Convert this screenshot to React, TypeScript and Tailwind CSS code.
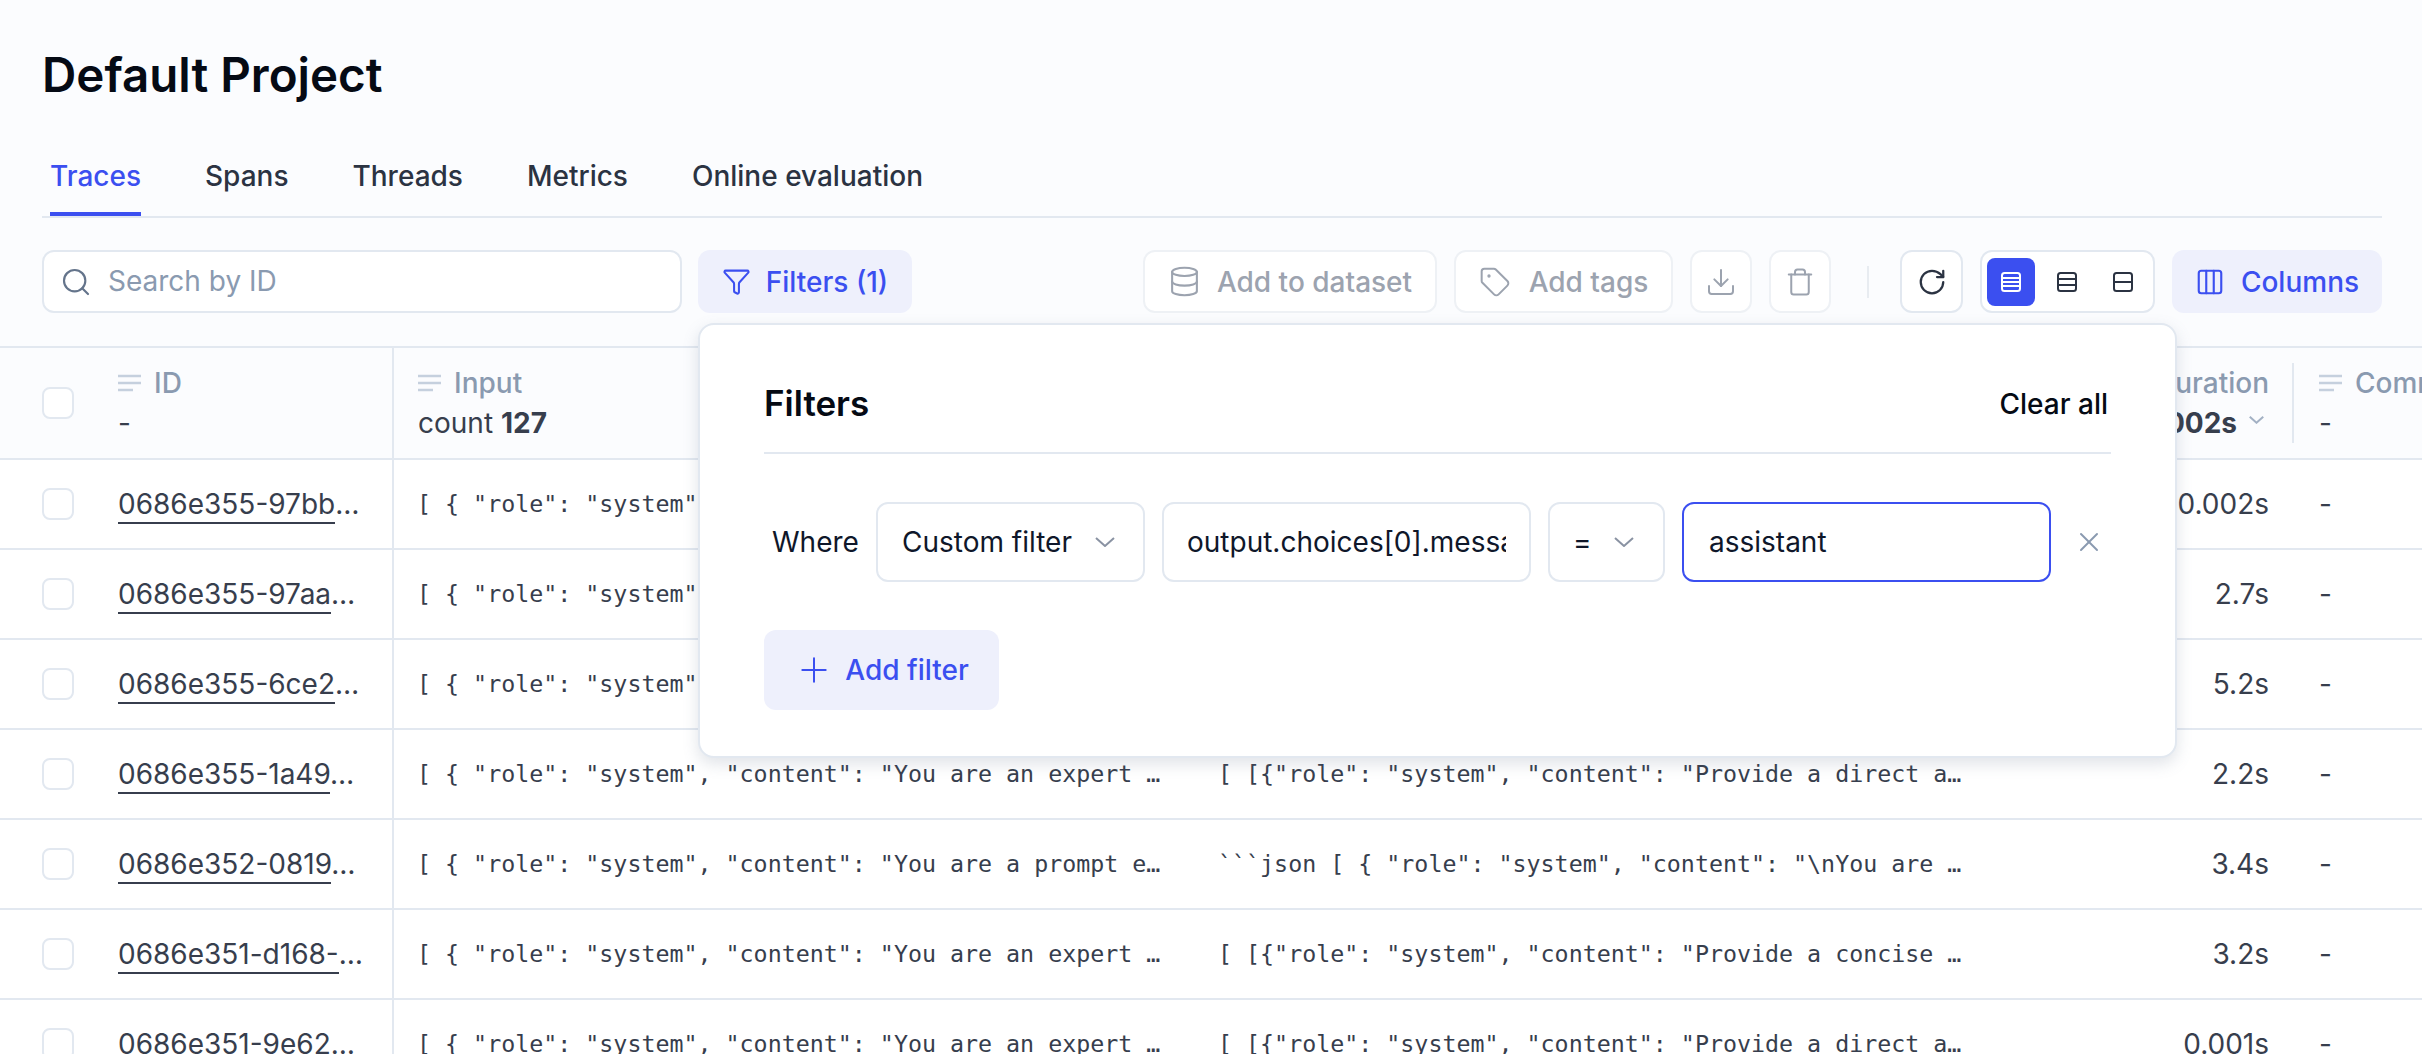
import { Columns3, Database, Download, Funnel, Plus, RotateCw, Search, Tag, Trash, X } from 'lucide-react';

const rows = [
  { id: '0686e355-97bb', input: '[ { "role": "system", "content": "You are an expert …', output: '[ [{"role": "system", "content": "Provide a direct a…', duration: '0.002s' },
  { id: '0686e355-97aa', input: '[ { "role": "system", "content": "You are an expert …', output: '[ [{"role": "system", "content": "Provide a direct a…', duration: '2.7s' },
  { id: '0686e355-6ce2', input: '[ { "role": "system", "content": "You are an expert …', output: '[ [{"role": "system", "content": "Provide a direct a…', duration: '5.2s' },
  { id: '0686e355-1a49', input: '[ { "role": "system", "content": "You are an expert …', output: '[ [{"role": "system", "content": "Provide a direct a…', duration: '2.2s' },
  { id: '0686e352-0819', input: '[ { "role": "system", "content": "You are a prompt e…', output: '```json [ { "role": "system", "content": "\\nYou are …', duration: '3.4s' },
  { id: '0686e351-d168-', input: '[ { "role": "system", "content": "You are an expert …', output: '[ [{"role": "system", "content": "Provide a concise …', duration: '3.2s' },
  { id: '0686e351-9e62', input: '[ { "role": "system", "content": "You are an expert …', output: '[ [{"role": "system", "content": "Provide a direct a…', duration: '0.001s' },
];

const tabs = ['Traces', 'Spans', 'Threads', 'Metrics', 'Online evaluation'];

function LinesIcon() {
  return (
    <svg width="24" height="18" viewBox="0 0 24 18" fill="none" stroke="#c5d0de" strokeWidth="2.4" className="shrink-0">
      <path d="M0 2h23M0 9h23M0 16h15" />
    </svg>
  );
}

function RowsIcon({ lines, color }: { lines: number[]; color: string }) {
  return (
    <svg width="22" height="22" viewBox="0 0 22 22" fill="none" stroke={color} strokeWidth="2">
      <rect x="2" y="2" width="18" height="18" rx="2.5" />
      {lines.map((y) => (
        <path key={y} d={`M2 ${y}h18`} />
      ))}
    </svg>
  );
}

function Chevron({ w, color, className }: { w: number; color: string; className?: string }) {
  return (
    <svg width={w} height={w / 2} viewBox="0 0 20 10" fill="none" stroke={color} strokeWidth={(2 * 20) / w} className={className}>
      <path d="M1 1l9 8 9-8" />
    </svg>
  );
}

function Checkbox() {
  return <div className="w-8 h-8 rounded-lg border-2 border-[#e2e8f0] bg-white shrink-0" />;
}

function ToolButton({ className, children }: { className: string; children: React.ReactNode }) {
  return (
    <button className={`h-[63px] rounded-xl border-2 border-[#eef1f5] bg-white flex items-center justify-center text-[#9ca3af] text-[28px] font-medium ${className}`}>
      {children}
    </button>
  );
}

function HeaderCell({ label, children }: { label: string; children: React.ReactNode }) {
  return (
    <div className="flex flex-col gap-1 text-[28px] leading-[36px] text-[#373e4d]">
      <div className="flex items-center gap-3 text-[#8a9ab0] font-medium">
        <LinesIcon />
        <span className="whitespace-nowrap">{label}</span>
      </div>
      {children}
    </div>
  );
}

function FilterBox({ className, children }: { className: string; children: React.ReactNode }) {
  return (
    <div className={`h-20 rounded-xl border-2 flex items-center text-[28px] text-[#0f172a] bg-white overflow-hidden whitespace-nowrap ${className}`}>
      {children}
    </div>
  );
}

export default function App() {
  return (
    <div className="relative w-[2422px] h-[1054px] overflow-hidden bg-[#fbfcfe] font-['Inter',sans-serif]">
      <div className="pl-[42px] pr-[40px]">
        <h1 className="pt-[47px] text-[47.5px] leading-[56px] font-semibold text-[#050a14]">Default Project</h1>
        <div className="mt-[55px] h-[60px] flex gap-[64px] pl-2 border-b-2 border-[#e2e8f0]">
          {tabs.map((t, i) => (
            <div
              key={t}
              className={`h-[58px] text-[28px] leading-[36px] font-medium whitespace-nowrap ${
                i === 0 ? 'text-[#3b4ff0] border-b-4 border-[#3b4ff0]' : 'text-[#2b3342]'
              }`}
            >
              {t}
            </div>
          ))}
        </div>

        <div className="mt-[32px] flex items-center">
          <div className="w-[640px] h-[63px] rounded-xl border-2 border-[#e2e8f0] bg-white flex items-center gap-4 px-4 text-[28px] text-[#8a9ab0]">
            <Search size={32} color="#64748b" strokeWidth={1.6} />
            <span className="pb-[2px]">Search by ID</span>
          </div>
          <button className="ml-[16px] w-[214px] h-[63px] rounded-xl bg-[#eef0fc] flex items-center justify-center gap-[15px] text-[28px] font-medium text-[#3b4ff0]">
            <Funnel size={29} strokeWidth={1.7} />
            Filters (1)
          </button>
          <div className="ml-auto flex items-center gap-[17px]">
            <ToolButton className="w-[294px] gap-4">
              <Database size={33} strokeWidth={1.5} />
              Add to dataset
            </ToolButton>
            <ToolButton className="w-[219px] gap-[18px]">
              <Tag size={32} strokeWidth={1.5} />
              Add tags
            </ToolButton>
            <ToolButton className="w-[62px]">
              <Download size={32} strokeWidth={1.5} />
            </ToolButton>
            <ToolButton className="w-[62px]">
              <Trash size={30} strokeWidth={1.6} />
            </ToolButton>
            <div className="w-0.5 h-8 bg-[#e8ecf1] ml-[19px] mr-[14px]" />
            <button className="w-[63px] h-[63px] rounded-xl border-2 border-[#e2e8f0] bg-white flex items-center justify-center text-[#2b3342]">
              <RotateCw size={30} strokeWidth={1.8} />
            </button>
            <div className="w-[175px] h-[63px] rounded-xl border-2 border-[#e2e8f0] bg-white flex items-center pl-[5px]">
              <span className="w-12 h-12 rounded-lg bg-[#3b4ff0] flex items-center justify-center">
                <RowsIcon lines={[7, 11, 15]} color="#ffffff" />
              </span>
              <span className="w-[56px] flex justify-center ml-[4px]"><RowsIcon lines={[8, 14]} color="#2b3342" /></span>
              <span className="w-[56px] flex justify-center"><RowsIcon lines={[11]} color="#2b3342" /></span>
            </div>
            <button className="w-[210px] h-[63px] rounded-xl bg-[#eef0fc] flex items-center justify-center gap-4 text-[28px] font-medium text-[#3b4ff0]">
              <Columns3 size={30} strokeWidth={1.7} />
              Columns
            </button>
          </div>
        </div>
      </div>

      <div className="mt-[33px] border-t-2 border-[#e2e8f0]">
        <div className="h-[112px] flex border-b-2 border-[#e2e8f0]">
          <div className="w-[394px] shrink-0 flex items-center border-r-2 border-[#e2e8f0]">
            <div className="ml-[42px] mr-[44px]"><Checkbox /></div>
            <HeaderCell label="ID"><span>-</span></HeaderCell>
          </div>
          <div className="w-[808px] shrink-0 flex items-center pl-[24px]">
            <HeaderCell label="Input">
              <span>count <b className="font-bold">127</b></span>
            </HeaderCell>
          </div>
          <div className="w-[1092px] shrink-0 flex items-center justify-end pr-[25px]">
            <div className="flex flex-col items-end gap-1 text-[28px] leading-[36px]">
              <span className="text-[#8a9ab0] font-medium">Duration</span>
              <span className="flex items-center gap-3 font-bold text-[#373e4d] pr-[5px]">
                0.002s
                <Chevron w={15} color="#a3b1c4" className="mb-[6px]" />
              </span>
            </div>
            <div className="absolute left-[2292px] w-0.5 h-[80px] bg-[#e2e8f0]" />
          </div>
          <div className="flex-1 flex items-center pl-[25px] overflow-hidden">
            <HeaderCell label="Comments"><span>-</span></HeaderCell>
          </div>
        </div>

        <div className="bg-white">
          {rows.map((r) => (
            <div key={r.id} className="h-[90px] flex border-b-2 border-[#e2e8f0] text-[28px] text-[#373e4d]">
              <div className="w-[394px] shrink-0 flex items-center border-r-2 border-[#e2e8f0]">
                <div className="ml-[42px] mr-[44px]"><Checkbox /></div>
                <span className="whitespace-nowrap leading-[36px]">
                  <span className="border-b-2 border-[#373e4d] pb-px">{r.id}</span>…
                </span>
              </div>
              <div className="w-[801px] shrink-0 flex items-center pl-[23px] whitespace-nowrap font-['DejaVu_Sans_Mono',monospace] text-[23.3px]">
                {r.input}
              </div>
              <div className="w-[760px] shrink-0 flex items-center pl-[23px] whitespace-nowrap font-['DejaVu_Sans_Mono',monospace] text-[23.3px]">
                {r.output}
              </div>
              <div className="w-[339px] shrink-0 flex items-center justify-end pr-[25px]">{r.duration}</div>
              <div className="flex-1 flex items-center pl-[25px]">-</div>
            </div>
          ))}
        </div>
      </div>

      {/* Filters popover */}
      <div className="absolute left-[698px] top-[323px] w-[1479px] h-[435px] rounded-2xl border-2 border-[#e2e8f0] bg-white shadow-[0_6px_16px_rgba(100,116,139,0.2)] pl-[64px] pr-[64px]">
        <div className="h-[129px] pt-[30px] flex items-center justify-between border-b-2 border-[#e2e8f0]">
          <span className="text-[35px] font-semibold text-[#050a14]">Filters</span>
          <span className="text-[28px] font-medium text-[#050a14] mr-[3px]">Clear all</span>
        </div>
        <div className="mt-[48px] flex items-center">
          <span className="w-[112px] pl-[8px] text-[28px] text-[#0f172a]">Where</span>
          <FilterBox className="w-[269px] border-[#e2e8f0] pl-[24px]">
            Custom filter
            <Chevron w={20} color="#8a93a3" className="ml-[23px]" />
          </FilterBox>
          <FilterBox className="ml-[17px] w-[369px] border-[#e2e8f0] pl-[23px] pr-[23px]">
            <span className="block overflow-hidden">output.choices[0].message.role</span>
          </FilterBox>
          <FilterBox className="ml-[17px] w-[117px] border-[#e2e8f0] pl-[23px]">
            =
            <Chevron w={20} color="#8a93a3" className="ml-[22px]" />
          </FilterBox>
          <FilterBox className="ml-[17px] w-[369px] border-[#3b4ff0] pl-[25px]">assistant</FilterBox>
          <X size={32} color="#8a9ab0" strokeWidth={1.5} className="ml-[22px]" />
        </div>
        <button className="mt-[48px] w-[235px] h-20 rounded-xl bg-[#eef0fc] flex items-center justify-center gap-[11px] text-[28px] font-medium text-[#3b4ff0]">
          <Plus size={40} strokeWidth={1.2} />
          Add filter
        </button>
      </div>
    </div>
  );
}
